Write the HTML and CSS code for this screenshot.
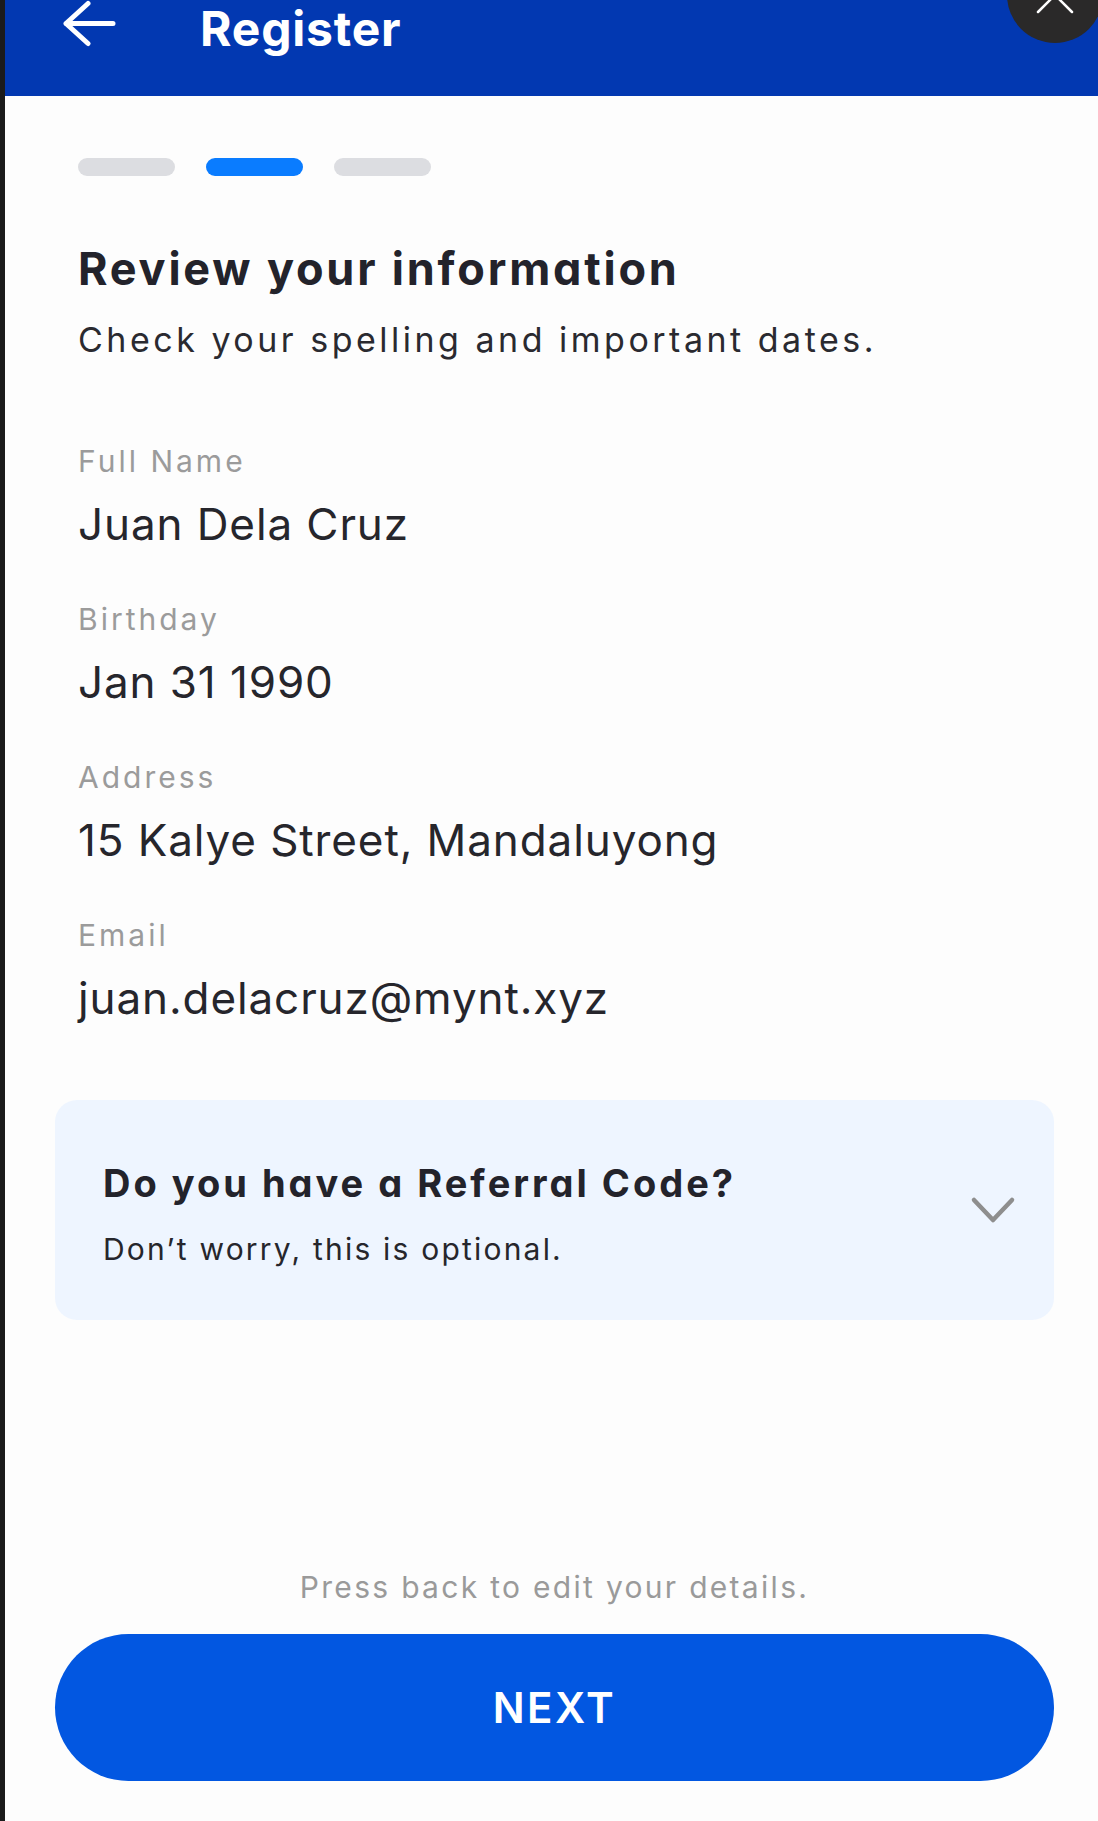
FILE: index.html
```html
<!DOCTYPE html>
<html lang="en">
<head>
<meta charset="utf-8">
<title>Register</title>
<link rel="stylesheet" href="styles.css">
</head>
<body>
<div class="screen">
  <div class="edge"></div>
  <div class="app">
    <header class="topbar">
      <svg class="back" width="54" height="48" viewBox="0 0 54 48" aria-hidden="true">
        <path d="M51 23.5H4M26 3.5L4 23.5L26 43.5" fill="none" stroke="#fff" stroke-width="5" stroke-linecap="round" stroke-linejoin="round"/>
      </svg>
      <h1 class="title">Register</h1>
      <div class="close">
        <svg width="96" height="96" viewBox="0 0 96 96" aria-hidden="true">
          <path d="M31 31L65 65M65 31L31 65" fill="none" stroke="#fff" stroke-width="2.5" stroke-linecap="round"/>
        </svg>
      </div>
    </header>
    <main class="content">
      <section class="intro">
        <div class="steps">
          <span class="step"></span>
          <span class="step active"></span>
          <span class="step"></span>
        </div>
        <h2 class="heading">Review your information</h2>
        <p class="sub">Check your spelling and important dates.</p>
        <div class="fields">
          <div class="field">
            <div class="label">Full Name</div>
            <div class="value">Juan Dela Cruz</div>
          </div>
          <div class="field">
            <div class="label">Birthday</div>
            <div class="value">Jan 31 1990</div>
          </div>
          <div class="field">
            <div class="label">Address</div>
            <div class="value">15 Kalye Street, Mandaluyong</div>
          </div>
          <div class="field">
            <div class="label">Email</div>
            <div class="value">juan.delacruz@mynt.xyz</div>
          </div>
        </div>
      </section>
      <div class="referral">
        <div class="ref-text">
          <div class="ref-title">Do you have a Referral Code?</div>
          <div class="ref-sub">Don’t worry, this is optional.</div>
        </div>
        <svg class="chev" width="50" height="32" viewBox="0 0 50 32" aria-hidden="true">
          <path d="M6 6L25 26L44 6" fill="none" stroke="#8e8e8e" stroke-width="4.5" stroke-linecap="round" stroke-linejoin="round"/>
        </svg>
      </div>
      <div class="footer">
        <p class="hint">Press back to edit your details.</p>
        <button class="next" type="button">NEXT</button>
      </div>
    </main>
  </div>
</div>
</body>
</html>
```

FILE: styles.css
```css
html, body {
  margin: 0;
  padding: 0;
  background: #ffffff;
}

.screen {
  display: flex;
  height: 1821px;
  overflow: hidden;
  position: relative;
  font-family: Inter, "Noto Sans", sans-serif;
}

.edge {
  flex: none;
  width: 5px;
  background: #1b1b1b;
}

.app {
  flex: 1;
  display: flex;
  flex-direction: column;
  position: relative;
  background: #fdfdfd;
}

.topbar {
  flex: none;
  height: 96px;
  box-sizing: border-box;
  background: #0238b1;
  display: flex;
  align-items: flex-start;
  padding-left: 57px;
  position: relative;
}

.back {
  flex: none;
  display: block;
}

.title {
  margin: 0 0 0 84px;
  font-family: Inter, sans-serif;
  font-weight: 700;
  font-size: 48px;
  line-height: 58px;
  letter-spacing: 0.8px;
  color: #ffffff;
}

.close {
  position: absolute;
  left: 1002px;
  top: -53px;
  width: 96px;
  height: 96px;
  border-radius: 50%;
  background: #2a2929;
}

.close svg {
  display: block;
}

.content {
  flex: 1;
  display: flex;
  flex-direction: column;
  padding: 62px 44px 40px 50px;
}

.intro {
  padding-left: 23px;
}

.steps {
  display: flex;
  gap: 31px;
}

.step {
  width: 97px;
  height: 18px;
  border-radius: 9px;
  background: #dcdde1;
}

.step.active {
  background: #0a7cff;
}

.heading {
  margin: 66px 0 0;
  font-weight: 700;
  font-size: 45px;
  line-height: 54px;
  letter-spacing: 2.8px;
  color: #23232b;
  font-feature-settings: "cv11";
}

.sub {
  margin: 22px 0 0;
  font-weight: 400;
  font-size: 34px;
  line-height: 44px;
  letter-spacing: 3.5px;
  color: #2a2a30;
}

.fields {
  margin-top: 79px;
  display: flex;
  flex-direction: column;
  gap: 47px;
}

.label {
  font-size: 30px;
  line-height: 40px;
  letter-spacing: 3px;
  color: #9b9b9b;
}

.value {
  margin-top: 15px;
  font-size: 44px;
  line-height: 56px;
  letter-spacing: 0.9px;
  color: #26262c;
}

.referral {
  margin-top: 74px;
  height: 220px;
  box-sizing: border-box;
  background: #eef5ff;
  border-radius: 22px;
  display: flex;
  align-items: flex-start;
  justify-content: space-between;
  padding: 59px 36px 0 48px;
}

.ref-title {
  font-weight: 700;
  font-size: 38px;
  line-height: 48px;
  letter-spacing: 3px;
  color: #23232b;
  font-feature-settings: "cv11";
}

.ref-sub {
  margin-top: 22px;
  font-size: 30px;
  line-height: 40px;
  letter-spacing: 2.2px;
  color: #26262c;
}

.chev {
  flex: none;
  display: block;
  margin-top: 35px;
}

.footer {
  margin-top: auto;
  display: flex;
  flex-direction: column;
  align-items: center;
}

.hint {
  margin: 0;
  font-size: 30px;
  line-height: 40px;
  letter-spacing: 2.3px;
  color: #9a9a9a;
}

.next {
  margin-top: 27px;
  width: 100%;
  height: 147px;
  border: none;
  border-radius: 74px;
  background: #0257e1;
  color: #ffffff;
  font-family: Inter, sans-serif;
  font-weight: 600;
  font-size: 42px;
  letter-spacing: 2.5px;
  padding: 0;
}
```
